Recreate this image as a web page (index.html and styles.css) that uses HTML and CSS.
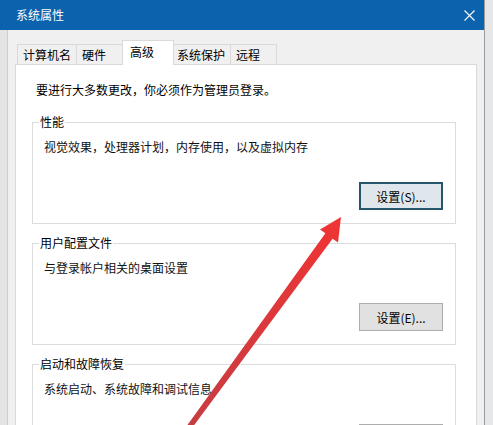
FILE: index.html
```html
<!DOCTYPE html>
<html lang="zh-CN">
<head>
    <meta charset="UTF-8">
    <meta name="viewport" content="width=device-width, initial-scale=1.0">
    <title>系统属性</title>
    <link rel="stylesheet" href="styles.css">
</head>
<body>
    <div class="window">
        <div class="titlebar">
            <span class="title">系统属性</span>
            <svg class="close" width="11" height="11" viewBox="0 0 11 11">
                <path d="M0.5 0.5 L10.5 10.5 M10.5 0.5 L0.5 10.5" stroke="#fff" stroke-width="1.1" fill="none"/>
            </svg>
        </div>

        <div class="client">
            <div class="tabs">
                <div class="tab">计算机名</div>
                <div class="tab">硬件</div>
                <div class="tab active">高级</div>
                <div class="tab">系统保护</div>
                <div class="tab">远程</div>
            </div>

            <div class="panel">
                <p class="note">要进行大多数更改，你必须作为管理员登录。</p>

                <fieldset class="group">
                    <legend>性能</legend>
                    <p class="desc">视觉效果，处理器计划，内存使用，以及虚拟内存</p>
                    <div class="actions">
                        <button class="btn focus">设置(S)...</button>
                    </div>
                </fieldset>

                <fieldset class="group">
                    <legend>用户配置文件</legend>
                    <p class="desc">与登录帐户相关的桌面设置</p>
                    <div class="actions">
                        <button class="btn">设置(E)...</button>
                    </div>
                </fieldset>

                <fieldset class="group">
                    <legend>启动和故障恢复</legend>
                    <p class="desc">系统启动、系统故障和调试信息</p>
                    <div class="actions">
                        <!-- only the top edge of this button is visible in the window -->
                        <button class="btn" aria-label="设置(T)..."></button>
                    </div>
                </fieldset>
            </div>
        </div>
    </div>

    <!-- red annotation arrow drawn over the dialog -->
    <svg class="arrow" width="493" height="425" viewBox="0 0 493 425">
        <defs>
            <linearGradient id="shaft" x1="340" y1="217" x2="188" y2="428" gradientUnits="userSpaceOnUse">
                <stop offset="0" stop-color="#f03434"/>
                <stop offset="1" stop-color="#c63d43"/>
            </linearGradient>
        </defs>
        <polygon points="341,217 320,229.5 325.4,233.3 186,427 190.5,430 332.6,238.7 338,242.5" fill="url(#shaft)"/>
    </svg>
</body>
</html>
```

FILE: styles.css
```css
html, body {
    margin: 0;
    height: 100%;
    overflow: hidden;
}

body {
    background-color: #e6e7e9;
    font-family: "Noto Sans CJK SC", "Microsoft YaHei", sans-serif;
    font-size: 12px;
    color: #000;
    position: relative;
}

.window {
    width: 484px;
    height: 425px;
    overflow: hidden;
    border-right: 1px solid #9c9c9c;
    background-color: #f0f0f0;
    display: flex;
    flex-direction: column;
}

.titlebar {
    height: 30px;
    flex: none;
    background-color: #0b63ad;
    color: #fff;
    display: flex;
    align-items: center;
    justify-content: space-between;
    padding: 0 9px 0 16px;
}

.title {
    line-height: 16px;
}

.client {
    flex: 1;
    min-height: 0;
    display: flex;
    flex-direction: column;
    border-left: 7px solid #e4e4e4;
    box-shadow: inset 1px 0 #cdcdcd;
    padding: 10px 7px 0 8px;
}

.tabs {
    display: flex;
    align-items: flex-end;
    height: 24px;
    flex: none;
    padding-left: 2px;
    position: relative;
    z-index: 1;
}

.tab {
    height: 20px;
    line-height: 19px;
    padding: 0 5px;
    min-width: 47px;
    box-sizing: border-box;
    border: 1px solid #d9d9d9;
    border-bottom: none;
    margin-left: -1px;
    background-color: #f0f0f0;
}

.tab:first-child {
    margin-left: 0;
}

.tab.active {
    height: 25px;
    line-height: 22px;
    min-width: 52px;
    padding: 0 7px;
    margin: 0 -2px -1px -1px;
    background-color: #fff;
    position: relative;
}

.panel {
    flex: 1;
    min-height: 0;
    overflow: hidden;
    background-color: #fff;
    border: 1px solid #d9d9d9;
    border-bottom: none;
    padding: 17px 0 0 16px;
}

.note {
    margin: 0 0 16px 4px;
    line-height: 16px;
}

.group {
    width: 424px;
    box-sizing: border-box;
    min-width: 0;
    margin: 0 0 11px;
    padding: 0 12px 13px 6px;
    border: 1px solid #dcdcdc;
}

.group legend {
    padding: 0 1px;
    line-height: 16px;
}

.desc {
    margin: 9px 0 0 5px;
    line-height: 16px;
    color: #111;
}

.actions {
    display: flex;
    justify-content: flex-end;
    margin-top: 27px;
}

.btn {
    width: 84px;
    height: 28px;
    padding: 0;
    border: 1px solid #adadad;
    background-color: #e1e1e1;
    font-family: inherit;
    font-size: 12px;
    color: #000;
}

.btn.focus {
    border: 2px solid #25566a;
    background-color: #dfe7ec;
}

.arrow {
    position: absolute;
    top: 0;
    left: 0;
    pointer-events: none;
}
```
